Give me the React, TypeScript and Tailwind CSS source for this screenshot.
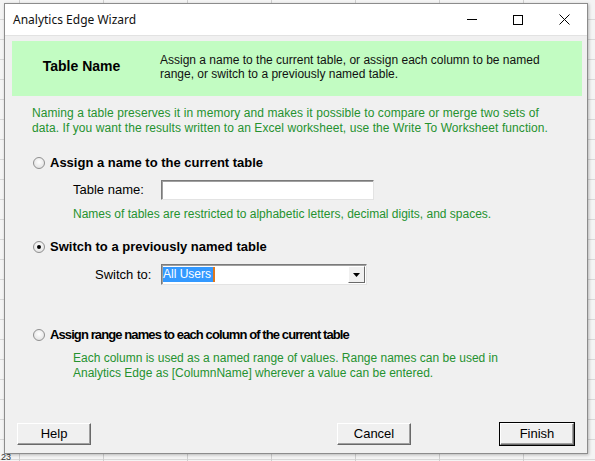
import { useState } from "react";

type Choice = "assign" | "switch" | "range";

const GREEN = "text-[#25922f]";

export default function App() {
  const [choice, setChoice] = useState<Choice>("switch");

  return (
    <div className="relative w-[595px] h-[461px] overflow-hidden bg-[#f4f4f4] font-['Liberation_Sans',Arial,sans-serif] text-black">
      <ExcelBackdrop />
      <div className="absolute left-[4px] top-[3px] w-[584px] h-[451px] flex flex-col bg-[#f0f0f0] border border-[#8c8c8c] shadow-[1px_1px_3px_rgba(0,0,0,0.25)]">
        <TitleBar title="Analytics Edge Wizard" />

        <div className="flex-1 flex flex-col border-t border-[#e2e2e2]">
          <div className="mt-[5px] ml-[7px] mr-[5px] h-[55px] flex items-center pb-[4px] bg-[#c2fcc2]">
            <div className="w-[139px] text-center text-[14px] font-bold">Table Name</div>
            <div className="ml-[9px] text-[12px] leading-[14px] text-[#111]">
              Assign a name to the current table, or assign each column to be named
              <br />
              range, or switch to a previously named table.
            </div>
          </div>

          <p className={`mt-[10px] ml-[27px] text-[12px] leading-[15px] tracking-[0.08px] ${GREEN}`}>
            Naming a table preserves it in memory and makes it possible to compare or merge two sets of
            <br />
            data. If you want the results written to an Excel worksheet, use the Write To Worksheet function.
          </p>

          <RadioRow
            className="mt-[19px]"
            label="Assign a name to the current table"
            checked={choice === "assign"}
            onSelect={() => setChoice("assign")}
          />
          <div className="mt-[9px] ml-[68px] flex items-center h-[20px]">
            <span className="w-[88px] text-[13px]">Table name:</span>
            <input
              type="text"
              className="w-[213px] h-[20px] bg-white border border-t-[#7a7a7a] border-l-[#7a7a7a] border-b-[#e3e3e3] border-r-[#e3e3e3] shadow-[inset_1px_1px_0_#a0a0a0] outline-none px-1 text-[12px]"
            />
          </div>
          <p className={`mt-[7px] ml-[68px] text-[12px] leading-[15px] ${GREEN}`}>
            Names of tables are restricted to alphabetic letters, decimal digits, and spaces.
          </p>

          <RadioRow
            className="mt-[17px]"
            label="Switch to a previously named table"
            checked={choice === "switch"}
            onSelect={() => setChoice("switch")}
          />
          <div className="mt-[9px] ml-[90px] flex items-center h-[21px]">
            <span className="w-[66px] text-[13px]">Switch to:</span>
            <div className="w-[206px] h-[21px] flex items-center bg-white border border-t-[#7a7a7a] border-l-[#7a7a7a] border-b-[#e3e3e3] border-r-[#e3e3e3] shadow-[inset_1px_1px_0_#a0a0a0]">
              <div className="flex-1 pl-[1px] flex items-center">
                <span className="bg-[#3399ff] text-white text-[12px] leading-[15px] pr-[2px] border-r-2 border-[#e0781e]">
                  All Users
                </span>
              </div>
              <div className="w-[17px] h-[17px] mr-[1px] flex items-center justify-center bg-[#f0f0f0] border border-t-white border-l-white border-b-[#696969] border-r-[#696969]">
                <svg width="7" height="4" viewBox="0 0 7 4">
                  <path d="M0 0h7L3.5 4z" fill="#000" />
                </svg>
              </div>
            </div>
          </div>

          <RadioRow
            className="mt-[42px]"
            label="Assign range names to each column of the current table"
            checked={choice === "range"}
            onSelect={() => setChoice("range")}
            tight
          />
          <p className={`mt-[8px] ml-[68px] text-[12px] leading-[15px] ${GREEN}`}>
            Each column is used as a named range of values. Range names can be used in
            <br />
            Analytics Edge as [ColumnName] wherever a value can be entered.
          </p>

          <div className="flex-1" />
          <div className="flex items-center px-[12px] pb-[7px]">
            <WinButton label="Help" />
            <div className="flex-1" />
            <WinButton label="Cancel" />
            <div className="w-[88px]" />
            <WinButton label="Finish" isDefault />
          </div>
        </div>
      </div>
    </div>
  );
}

function TitleBar({ title }: { title: string }) {
  return (
    <div className="h-[31px] flex items-center bg-white">
      <span className="pl-[8px] flex-1 text-[12px] font-['Noto_Sans','Liberation_Sans',sans-serif] text-[#111]">
        {title}
      </span>
      <div className="w-[46px] h-full flex items-center justify-center">
        <div className="w-[10px] h-px bg-black" />
      </div>
      <div className="w-[46px] h-full flex items-center justify-center">
        <div className="w-[10px] h-[10px] border border-black" />
      </div>
      <div className="w-[46px] h-full flex items-center justify-center">
        <svg width="11" height="11" viewBox="0 0 11 11">
          <path d="M0.5 0.5l10 10M10.5 0.5l-10 10" stroke="#000" strokeWidth="1" />
        </svg>
      </div>
    </div>
  );
}

function RadioRow({
  label,
  checked,
  onSelect,
  className,
  tight,
}: {
  label: string;
  checked: boolean;
  onSelect: () => void;
  className: string;
  tight?: boolean;
}) {
  return (
    <div className={`${className} ml-[28px] h-[16px] flex items-center cursor-default`} onClick={onSelect}>
      <div className="w-[12px] h-[12px] rounded-full border border-[#8f8f8f] bg-[radial-gradient(circle_at_50%_40%,#ffffff,#dcdcdc)] flex items-center justify-center">
        {checked && <div className="w-[4px] h-[4px] rounded-full bg-black" />}
      </div>
      <span className={`ml-[5px] text-[13px] font-bold ${tight ? "tracking-[-0.9px]" : ""}`}>{label}</span>
    </div>
  );
}

function WinButton({ label, isDefault }: { label: string; isDefault?: boolean }) {
  return (
    <div className={isDefault ? "border border-black" : ""}>
      <button className="w-[74px] h-[22px] flex items-center justify-center bg-[#f0f0f0] border border-t-white border-l-white border-b-[#696969] border-r-[#696969] shadow-[inset_-1px_-1px_0_#a0a0a0] text-[13px]">
        {label}
      </button>
    </div>
  );
}

function ExcelBackdrop() {
  return (
    <div className="absolute inset-0 bg-[#f4f4f4] bg-[repeating-linear-gradient(90deg,transparent_0,transparent_19px,#cfcfcf_19px,#cfcfcf_20px,transparent_20px,transparent_84px),repeating-linear-gradient(180deg,transparent_0,transparent_19px,#d8d8d8_19px,#d8d8d8_20px)]">
      <div className="absolute left-0 top-[453px] w-[20px] text-[9px] leading-[8px] text-[#333] pl-[1px]">23</div>
    </div>
  );
}
